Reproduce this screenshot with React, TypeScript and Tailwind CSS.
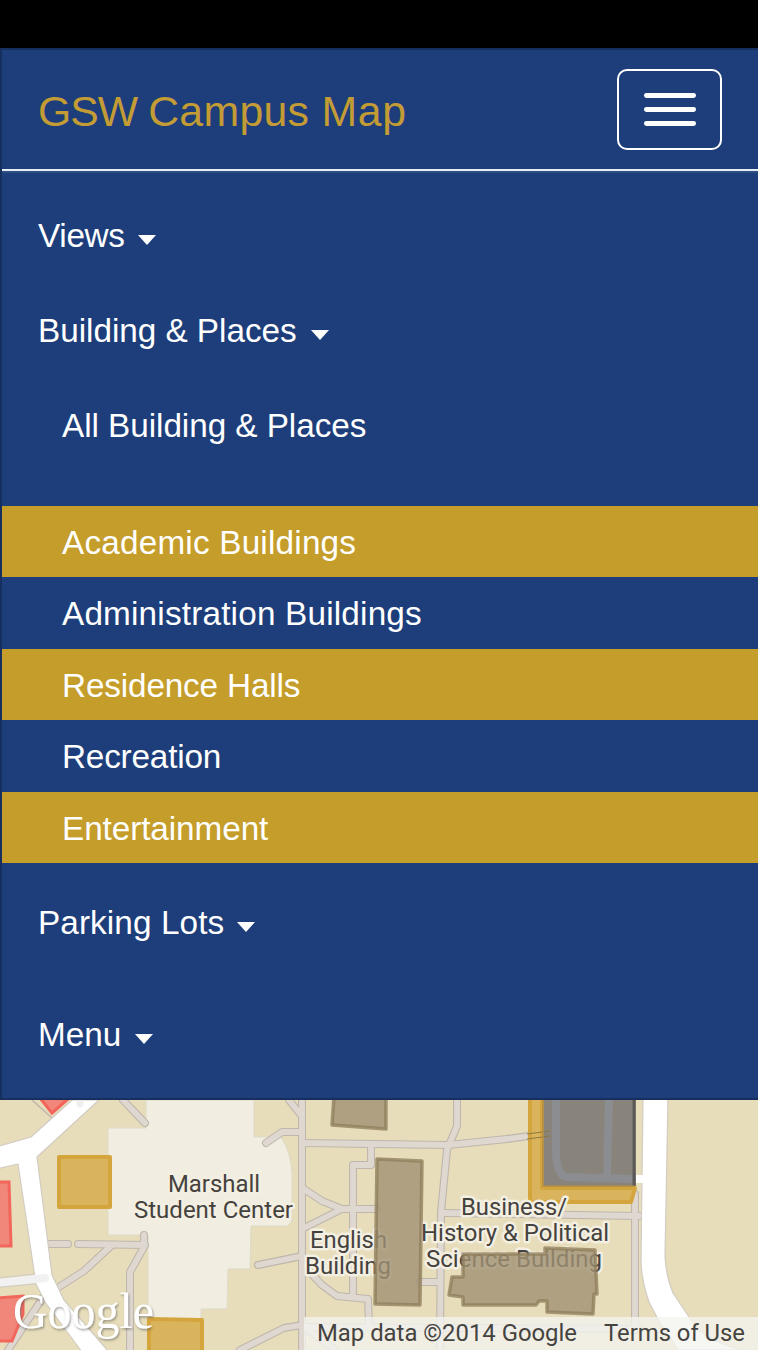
import React from "react";

const navText =
  "font-['Liberation_Sans',Arial,sans-serif] text-[33.3px] leading-none whitespace-nowrap";

function Caret() {
  return (
    <span className="mt-[8px] h-0 w-0 border-x-[9.5px] border-t-[10px] border-x-transparent border-t-white" />
  );
}

function NavItem({ label, spacing, gap }: { label: string; spacing: string; gap: string }) {
  return (
    <button type="button" className={`flex h-[95px] w-full items-center pb-px pl-9 text-white ${gap}`}>
      <span className={`${navText} ${spacing}`}>{label}</span>
      <Caret />
    </button>
  );
}

const places = [
  { label: "Academic Buildings", gold: true, spacing: "tracking-[0.2px]" },
  { label: "Administration Buildings", gold: false, spacing: "tracking-[0.19px]" },
  { label: "Residence Halls", gold: true, spacing: "tracking-[-0.15px]" },
  { label: "Recreation", gold: false, spacing: "tracking-[-0.2px]" },
  { label: "Entertainment", gold: true, spacing: "tracking-[-0.08px]" },
];

const paths = [
  "M123 1100 L145 1123",
  "M48 1244 H68",
  "M78 1244 L145 1245",
  "M144 1235 V1247 L130 1272 V1350",
  "M112 1245 L84 1271 L48 1294",
  "M44 1296 L8 1350",
  "M289 1100 L301 1115",
  "M302 1100 V1350",
  "M266 1143 L282 1132 H302",
  "M302 1143 L448 1145 L507 1139 L550 1133",
  "M457 1100 V1126 L447 1150 L441 1212 L440 1350",
  "M371 1146 V1165 H353 V1296",
  "M304 1189 L322 1201 L342 1209 H376",
  "M342 1209 L304 1228",
  "M258 1265 L302 1256",
  "M304 1266 L322 1285 L337 1296 L368 1299 L369 1325",
  "M444 1213 L640 1216",
  "M420 1282 H440",
  "M635 1194 V1330",
  "M240 1350 L284 1328 L302 1325 L335 1350",
  "M302 1327 L640 1329",
];

function Label({ x, y, width, children }: { x: number; y: number; width: number; children: string }) {
  return (
    <text x={x} y={y} textLength={width} lengthAdjust="spacingAndGlyphs">
      {children}
    </text>
  );
}

function CampusMap() {
  return (
    <svg
      className="block h-[250px] w-[758px]"
      viewBox="0 1100 758 250"
      fontFamily="Roboto, sans-serif"
    >
      <defs>
        <filter id="soft" x="-5%" y="-5%" width="110%" height="110%">
          <feGaussianBlur stdDeviation="0.7" />
        </filter>
        <filter id="logoShadow" x="-10%" y="-20%" width="120%" height="150%">
          <feDropShadow dx="1" dy="1.5" stdDeviation="1.3" floodColor="#555" floodOpacity="0.6" />
        </filter>
      </defs>
      <rect y="1100" width="758" height="250" fill="#e7ddba" />
      <path
        d="M146 1100 H254 V1137 H281 Q291 1152 292 1174 V1220 L288 1226 H251 L250 1269 H228 L227 1309 H201 V1320 H148 V1235 H108 V1128 H146 Z"
        fill="#f1eee1"
        stroke="#dddac9"
        strokeWidth="1"
      />
      <g filter="url(#soft)" fill="none" strokeLinecap="round" strokeLinejoin="round">
        {paths.map((d) => (
          <path key={d} d={d} stroke="#bfb7ac" strokeWidth="8" />
        ))}
        {paths.map((d) => (
          <path key={d} d={d} stroke="#dfd8d1" strokeWidth="5.8" />
        ))}
      </g>
      <path d="M32 1100 L52 1118" stroke="#bfb7ac" strokeWidth="1.5" />
      <g filter="url(#soft)" fill="#f0877a" stroke="#f2665b" strokeWidth="3">
        <path d="M40 1098 L52 1113 L68 1099 Z" />
        <path d="M-4 1182 H9 L11 1246 H-4 Z" />
        <path d="M-4 1298 L23 1296 V1314 L12 1341 H-4 Z" />
      </g>
      <g filter="url(#soft)" strokeLinejoin="round">
        <path d="M-4 1147 L31 1137 L72 1100 H99 L37 1157 L52 1275 L64 1300 L109 1352 H82 L45 1302 L36 1284 L18 1164 L-4 1169 Z" fill="#fff" stroke="#d2ccc2" strokeWidth="1.2" />
        <path d="M-4 1283 L45 1278" stroke="#f2f1f2" strokeWidth="8" fill="none" strokeLinecap="round" />
        <path d="M-4 1278 L35 1274 M-4 1287.5 L36 1284" stroke="#cfcbc5" strokeWidth="1" fill="none" />
        <path d="M80 1103 V1104" stroke="#f0eff0" strokeWidth="7" strokeLinecap="round" />
        <path d="M643 1098 H668 L665 1256 Q666 1276 673 1293 L697 1329 Q719 1345 742 1350 H678 Q673 1340 661 1325 L649 1302 Q641 1279 641 1260 Z" fill="#fff" stroke="#d2ccc2" strokeWidth="1.2" />
        <path d="M632 1179 H648" stroke="#fff" strokeWidth="8" />
      </g>
      <g filter="url(#soft)" fill="#dab45d" stroke="#d5a53e" strokeWidth="4" strokeLinejoin="round">
        <path d="M59 1157 H110 V1207 H59 Z" />
        <path d="M149 1319 L202 1320 V1354 H149 Z" />
        <path d="M530 1096 H542 V1188 H635 L631 1202 H530 Z" />
      </g>
      <g filter="url(#soft)">
        <path d="M544 1098 H636 V1186 H544 Z" fill="#88847b" />
        <path d="M556 1098 V1153 Q557 1176 567 1177 L634 1179 M609 1098 L607 1176" fill="none" stroke="#8b8d90" strokeWidth="8" />
        <path d="M527 1134 L550 1131 M527 1139 L550 1136" stroke="#8d7646" strokeWidth="1" />
        <path d="M634 1098 V1186" stroke="#5b5a58" strokeWidth="3" />
        <path d="M543 1098 V1186 H634" stroke="#ac8c4d" strokeWidth="1.5" fill="none" />
      </g>
      <g
        fill="#45423e"
        fontSize="24"
        stroke="#f3efe2"
        strokeWidth="5"
        strokeLinejoin="round"
        paintOrder="stroke"
      >
        <Label x={168} y={1192} width={92}>Marshall</Label>
        <Label x={134} y={1218} width={159}>Student Center</Label>
        <Label x={310} y={1248} width={77}>English</Label>
        <Label x={305} y={1274} width={86}>Building</Label>
        <Label x={461} y={1215} width={106}>Business/</Label>
        <Label x={421} y={1241} width={188}>History &amp; Political</Label>
        <Label x={426} y={1267} width={176}>Science Building</Label>
      </g>
      <g filter="url(#soft)" fill="#a09173" fillOpacity="0.8" stroke="#8d7c58" strokeOpacity="0.75" strokeWidth="3.5" strokeLinejoin="round">
        <path d="M334 1096 L332 1125 L386 1129 V1096 Z" />
        <path d="M377 1159 L422 1161 L420 1305 L375 1304 Z" />
        <path d="M463 1254 H545 V1248 L595 1250 L597 1294 H594 L593 1314 L547 1312 V1301 H539 L536 1305 H463 V1297 L449 1295 L452 1277 H463 Z" />
      </g>
      <path d="M304 1317 H758 V1350 H304 Z" fill="#f4f3ef" fillOpacity="0.78" />
      <g fill="#45433f" fontSize="24">
        <Label x={317} y={1340.5} width={260}>Map data ©2014 Google</Label>
        <Label x={604} y={1340.5} width={141}>Terms of Use</Label>
      </g>
      <text
        x="13"
        y="1328"
        fontFamily="Liberation Serif, serif"
        fontSize="50"
        fill="#fff"
        textLength="141"
        lengthAdjust="spacingAndGlyphs"
        filter="url(#logoShadow)"
      >
        Google
      </text>
    </svg>
  );
}

export default function App() {
  return (
    <div className="flex h-[1350px] w-[758px] flex-col overflow-hidden bg-black">
      <div className="h-12 shrink-0" />
      <nav className="h-[1052px] shrink-0 border-y-2 border-l-2 border-[#172f5e] bg-[#1d3e7a]">
        <header className="border-b-2 border-[#2f4f83]">
          <div className="flex h-[121px] items-start justify-between border-b-2 border-[#e6edf7] px-9">
            <h1 className="mt-[40px] font-['Liberation_Sans',Arial,sans-serif] text-[42.8px] leading-[43px] whitespace-nowrap text-[#c39c35]">
              <span className="tracking-[-1px]">GSW </span>
              <span className="tracking-[0.3px]">Campus </span>
              <span className="tracking-[0.6px]">Map</span>
            </h1>
            <button
              type="button"
              aria-label="Toggle navigation"
              className="mt-[19px] flex h-[81px] w-[105px] flex-col items-center justify-center gap-[9.3px] rounded-[10px] border-[2.4px] border-white"
            >
              <span className="h-[5px] w-[52px] rounded-[2.4px] bg-white" />
              <span className="h-[5px] w-[52px] rounded-[2.4px] bg-white" />
              <span className="h-[5px] w-[52px] rounded-[2.4px] bg-white" />
            </button>
          </div>
        </header>
        <div className="pt-4">
          <NavItem label="Views" spacing="tracking-[-0.3px]" gap="gap-[13px]" />
          <NavItem label="Building & Places" spacing="tracking-[-0.03px]" gap="gap-[14px]" />
          <div className="flex h-[95px] items-center pb-px pl-[60px] text-white">
            <span className={`${navText} tracking-[-0.05px]`}>All Building &amp; Places</span>
          </div>
          <ul className="mt-8">
            {places.map((p) => (
              <li
                key={p.label}
                className={`flex h-[71.4px] items-center pt-[2px] pl-[60px] text-white ${p.gold ? "bg-[#c59d2a]" : ""}`}
              >
                <span className={`${navText} ${p.spacing}`}>{p.label}</span>
              </li>
            ))}
          </ul>
          <div className="mt-[13px]">
            <NavItem label="Parking Lots" spacing="tracking-[0.1px]" gap="gap-[13px]" />
          </div>
          <div className="mt-[17px]">
            <NavItem label="Menu" spacing="tracking-[0px]" gap="gap-[14px]" />
          </div>
        </div>
      </nav>
      <CampusMap />
    </div>
  );
}
